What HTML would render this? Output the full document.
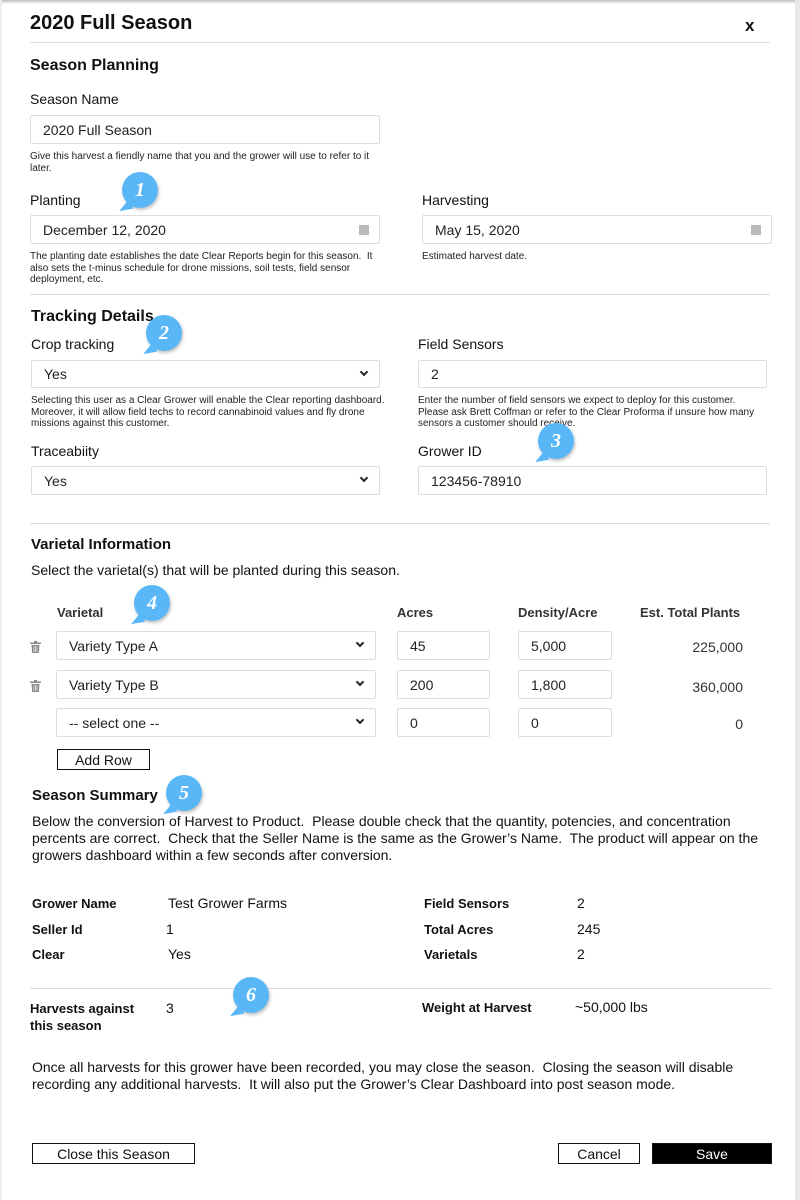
<!DOCTYPE html>
<html><head><meta charset="utf-8"><style>
*{box-sizing:border-box;margin:0;padding:0}
body{width:800px;height:1200px;position:relative;background:#fff;font-family:"Liberation Sans",Arial,sans-serif;color:#111;overflow:hidden}
.a{position:absolute;white-space:nowrap}
.t14{font-size:14px}
.b{font-weight:bold}
.h{font-size:16px;font-weight:bold}
.s{font-size:10px;line-height:11.5px;color:#222;white-space:normal}
.in{position:absolute;border:1px solid #ddd;border-radius:2px;font-size:14px;padding-left:12px;display:flex;align-items:center;color:#222}
.hr{position:absolute;height:1px;background:#ddd}
.cal{position:absolute;right:10px;top:9px;width:10px;height:10px;background:#bbb}
.chev{position:absolute;right:12px;top:8px;width:6px;height:6px;border-right:2px solid #222;border-bottom:2px solid #222;transform:rotate(45deg)}
.bd{position:absolute;width:36px;height:36px;border-radius:50%;background:#5ab7f7;color:#fff;font:bold italic 20px "Liberation Serif",serif;display:flex;align-items:center;justify-content:center;box-shadow:1px 2px 3px rgba(0,0,0,.25)}
.bd:after{content:"";position:absolute;left:-4px;bottom:-2px;width:0;height:0;border-top:12px solid transparent;border-right:14px solid #5ab7f7;transform:rotate(-10deg)}
.btn{position:absolute;border:1px solid #111;font-size:14px;display:flex;align-items:center;justify-content:center;height:21px}
.tr{position:absolute;width:11px;height:12px}
</style></head><body>
<div style="position:absolute;left:0;top:0;width:800px;height:4px;background:linear-gradient(#bbb,#fff)"></div>
<div style="position:absolute;right:0;top:0;width:5px;height:1200px;background:#e8e8e8"></div>
<div style="position:absolute;left:0;top:0;width:2px;height:1200px;background:#eee"></div>

<div class="a b" style="left:30px;top:12px;font-size:20px">2020 Full Season</div>
<div class="a b" style="left:745px;top:16px;font-size:17px">x</div>
<div class="hr" style="left:30px;top:42px;width:740px"></div>
<div class="a h" style="left:30px;top:57px">Season Planning</div>
<div class="a t14" style="left:30px;top:91px">Season Name</div>
<div class="in" style="left:30px;top:115px;width:350px;height:29px">2020 Full Season</div>
<div class="a s" style="left:30px;top:151px;width:355px">Give this harvest a fiendly name that you and the grower will use to refer to it later.</div>

<div class="a t14" style="left:30px;top:192px">Planting</div>
<div class="in" style="left:30px;top:215px;width:350px;height:29px">December 12, 2020<div class="cal"></div></div>
<div class="a s" style="left:30px;top:251px;width:350px">The planting date establishes the date Clear Reports begin for this season.&nbsp; It also sets the t-minus schedule for drone missions, soil tests, field sensor deployment, etc.</div>
<div class="a t14" style="left:422px;top:192px">Harvesting</div>
<div class="in" style="left:422px;top:215px;width:350px;height:29px">May 15, 2020<div class="cal"></div></div>
<div class="a s" style="left:422px;top:251px">Estimated harvest date.</div>
<div class="hr" style="left:30px;top:294px;width:740px"></div>

<div class="a h" style="left:31px;top:308px">Tracking Details</div>
<div class="a t14" style="left:31px;top:336px">Crop tracking</div>
<div class="in" style="left:31px;top:360px;width:349px;height:28px">Yes<div class="chev"></div></div>
<div class="a s" style="left:31px;top:395px;width:360px">Selecting this user as a Clear Grower will enable the Clear reporting dashboard. Moreover, it will allow field techs to record cannabinoid values and fly drone missions against this customer.</div>
<div class="a t14" style="left:418px;top:336px">Field Sensors</div>
<div class="in" style="left:418px;top:360px;width:349px;height:28px">2</div>
<div class="a s" style="left:418px;top:395px;width:350px">Enter the number of field sensors we expect to deploy for this customer. Please ask Brett Coffman or refer to the Clear Proforma if unsure how many sensors a customer should receive.</div>
<div class="a t14" style="left:31px;top:443px">Traceabiity</div>
<div class="in" style="left:31px;top:466px;width:349px;height:29px">Yes<div class="chev"></div></div>
<div class="a t14" style="left:418px;top:443px">Grower ID</div>
<div class="in" style="left:418px;top:466px;width:349px;height:29px">123456-78910</div>
<div class="hr" style="left:30px;top:523px;width:740px"></div>

<div class="a h" style="left:31px;top:536px;font-size:15px">Varietal Information</div>
<div class="a t14" style="left:31px;top:562px">Select the varietal(s) that will be planted during this season.</div>
<div class="a b" style="left:57px;top:605px;font-size:13px;color:#333">Varietal</div>
<div class="a b" style="left:397px;top:605px;font-size:13px;color:#333">Acres</div>
<div class="a b" style="left:518px;top:605px;font-size:13px;color:#333">Density/Acre</div>
<div class="a b" style="left:640px;top:605px;font-size:13px;color:#333">Est. Total Plants</div>

<svg class="tr" style="left:30px;top:641px" viewBox="0 0 11 12"><rect x="0" y="1.5" width="11" height="1.5" fill="#888"/><rect x="4" y="0" width="3" height="2" fill="#888"/><path d="M1.5 4h8l-.7 8h-6.6z" fill="#888"/><path d="M4 5v6M5.5 5v6M7 5v6" stroke="#fff" stroke-width=".6"/></svg>
<div class="in" style="left:56px;top:631px;width:320px;height:29px">Variety Type A<div class="chev"></div></div>
<div class="in" style="left:397px;top:631px;width:93px;height:29px">45</div>
<div class="in" style="left:518px;top:631px;width:94px;height:29px">5,000</div>
<div class="a t14" style="right:57px;top:639px;color:#333">225,000</div>

<svg class="tr" style="left:30px;top:680px" viewBox="0 0 11 12"><rect x="0" y="1.5" width="11" height="1.5" fill="#888"/><rect x="4" y="0" width="3" height="2" fill="#888"/><path d="M1.5 4h8l-.7 8h-6.6z" fill="#888"/><path d="M4 5v6M5.5 5v6M7 5v6" stroke="#fff" stroke-width=".6"/></svg>
<div class="in" style="left:56px;top:670px;width:320px;height:29px">Variety Type B<div class="chev"></div></div>
<div class="in" style="left:397px;top:670px;width:93px;height:29px">200</div>
<div class="in" style="left:518px;top:670px;width:94px;height:29px">1,800</div>
<div class="a t14" style="right:57px;top:679px;color:#333">360,000</div>

<div class="in" style="left:56px;top:708px;width:320px;height:29px">-- select one --<div class="chev"></div></div>
<div class="in" style="left:397px;top:708px;width:93px;height:29px">0</div>
<div class="in" style="left:518px;top:708px;width:94px;height:29px">0</div>
<div class="a t14" style="right:57px;top:716px;color:#333">0</div>

<div class="btn" style="left:57px;top:749px;width:93px">Add Row</div>

<div class="a h" style="left:32px;top:787px;font-size:15px">Season Summary</div>
<div class="a t14" style="left:32px;top:813px;line-height:17px;width:740px;white-space:normal">Below the conversion of Harvest to Product.&nbsp; Please double check that the quantity, potencies, and concentration percents are correct.&nbsp; Check that the Seller Name is the same as the Grower’s Name.&nbsp; The product will appear on the growers dashboard within a few seconds after conversion.</div>

<div class="a b" style="left:32px;top:896px;font-size:13px">Grower Name</div><div class="a t14" style="left:168px;top:895px">Test Grower Farms</div>
<div class="a b" style="left:32px;top:922px;font-size:13px">Seller Id</div><div class="a t14" style="left:166px;top:921px">1</div>
<div class="a b" style="left:32px;top:947px;font-size:13px">Clear</div><div class="a t14" style="left:168px;top:946px">Yes</div>
<div class="a b" style="left:424px;top:896px;font-size:13px">Field Sensors</div><div class="a t14" style="left:577px;top:895px">2</div>
<div class="a b" style="left:424px;top:922px;font-size:13px">Total Acres</div><div class="a t14" style="left:577px;top:921px">245</div>
<div class="a b" style="left:424px;top:947px;font-size:13px">Varietals</div><div class="a t14" style="left:577px;top:946px">2</div>
<div class="hr" style="left:30px;top:988px;width:741px"></div>
<div class="a b" style="left:30px;top:1000px;font-size:13px;line-height:17px">Harvests against<br>this season</div>
<div class="a t14" style="left:166px;top:1000px">3</div>
<div class="a b" style="left:422px;top:1000px;font-size:13px">Weight at Harvest</div>
<div class="a t14" style="left:575px;top:999px">~50,000 lbs</div>

<div class="a t14" style="left:32px;top:1059px;line-height:17px;width:740px;white-space:normal">Once all harvests for this grower have been recorded, you may close the season.&nbsp; Closing the season will disable recording any additional harvests.&nbsp; It will also put the Grower’s Clear Dashboard into post season mode.</div>

<div class="btn" style="left:32px;top:1143px;width:163px">Close this Season</div>
<div class="btn" style="left:558px;top:1143px;width:82px">Cancel</div>
<div class="btn" style="left:652px;top:1143px;width:120px;background:#000;color:#fff">Save</div>

<div class="bd" style="left:122px;top:172px">1</div>
<div class="bd" style="left:146px;top:315px">2</div>
<div class="bd" style="left:538px;top:423px">3</div>
<div class="bd" style="left:134px;top:585px">4</div>
<div class="bd" style="left:166px;top:775px">5</div>
<div class="bd" style="left:233px;top:977px">6</div>
</body></html>
